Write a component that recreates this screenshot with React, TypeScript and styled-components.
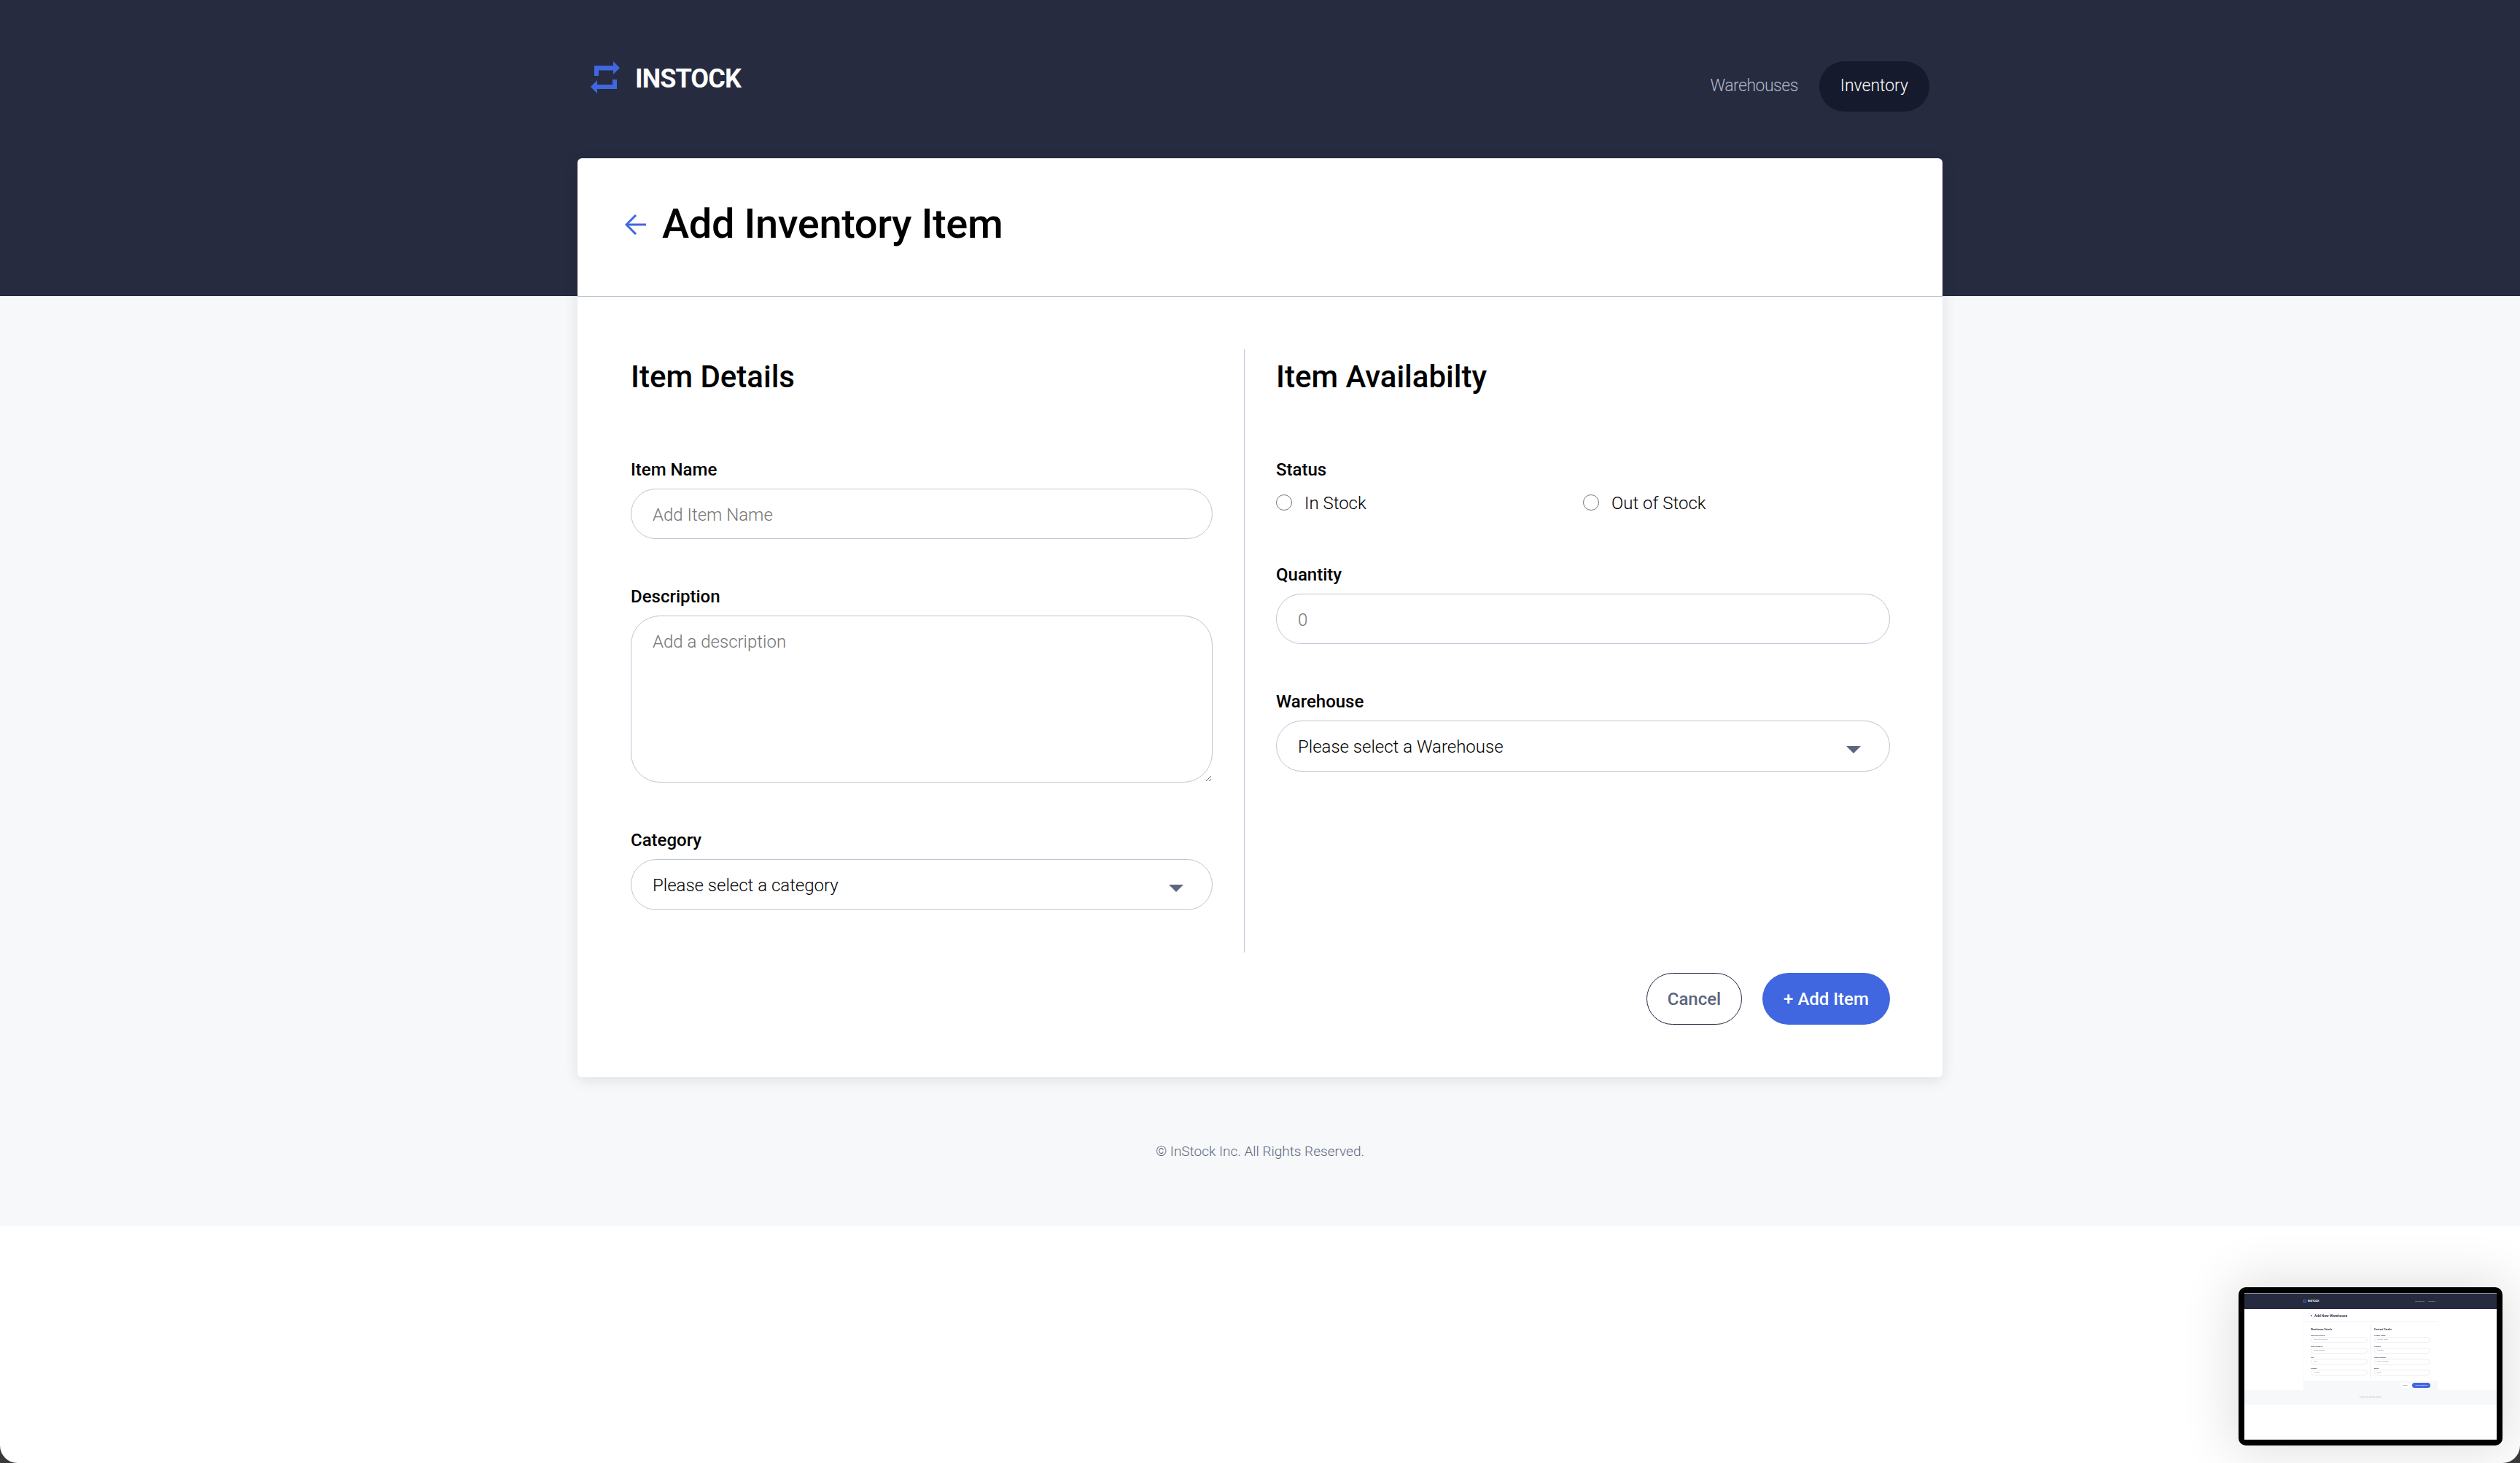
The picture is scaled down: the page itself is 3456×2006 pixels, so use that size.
import React from "react";
import styled, { createGlobalStyle } from "styled-components";

const FONT = `Roboto, "Noto Sans", "Liberation Sans", sans-serif`;

const Global = createGlobalStyle`
  *, *::before, *::after { box-sizing: border-box; }
  html, body { margin: 0; padding: 0; background: #3a3a3a; }
  body { font-family: ${FONT}; color: #000; }
  #root { width: 3456px; height: 2006px; }
`;

const Frame = styled.div`
  position: relative;
  width: 3456px;
  height: 2006px;
  background: #fff;
  border-radius: 0 0 24px 24px;
  overflow: hidden;
`;

const Main = styled.div`
  background: #f7f8fa;
  height: 1681px;
  display: flex;
  flex-direction: column;
`;

const Header = styled.header`
  background: #262b3f;
  height: 406px;
  flex: none;
`;

const HeaderInner = styled.div`
  width: 1872px;
  margin: 0 auto;
  padding: 84px 18px 0;
  display: flex;
  align-items: flex-start;
  justify-content: space-between;
`;

const Brand = styled.div`
  display: flex;
  align-items: center;
  gap: 21px;
  height: 44px;
`;

const BrandName = styled.span`
  color: #fff;
  font-size: 36px;
  font-weight: 700;
  letter-spacing: -0.9px;
  line-height: 44px;
  padding-top: 4px;
`;

const Nav = styled.nav`
  display: flex;
  align-items: center;
  gap: 29px;
`;

const NavItem = styled.a<{ $active?: boolean }>`
  display: flex;
  align-items: center;
  height: 69px;
  border-radius: 35px;
  font-size: 23px;
  font-weight: 300;
  line-height: 28px;
  padding: ${(p) => (p.$active ? "0 29px 1px" : "0 0 1px")};
  letter-spacing: ${(p) => (p.$active ? "0" : "-0.5px")};
  color: ${(p) => (p.$active ? "#fff" : "#b2b8ca")};
  background: ${(p) => (p.$active ? "#151a2c" : "transparent")};
`;

const Card = styled.section`
  width: 1872px;
  margin: -189px auto 0;
  background: #fff;
  border-radius: 6px;
  box-shadow: 0 4px 20px rgba(19, 24, 44, 0.1);
  flex: none;
`;

const TitleBar = styled.div`
  height: 190px;
  border-bottom: 1px solid #bdc5d5;
  padding: 0 0 10px 65px;
  display: flex;
  align-items: center;
  gap: 22px;
`;

const BackIcon = styled.svg`
  position: relative;
  top: 1px;
  flex: none;
`;

const Title = styled.h1`
  margin: 0;
  font-size: 56px;
  font-weight: 500;
  letter-spacing: -0.4px;
  line-height: 64px;
  color: #000;
`;

const Columns = styled.div`
  display: grid;
  grid-template-columns: 842px 885px;
  padding: 72px 0 0 73px;
`;

const Column = styled.div<{ $right?: boolean }>`
  display: flex;
  flex-direction: column;
  height: 827px;
  padding: ${(p) => (p.$right ? "0 0 0 43px" : "0 43px 0 0")};
  ${(p) => (p.$right ? "" : "border-right: 1px solid #bdc5d5;")}
`;

const Heading = styled.h2`
  margin: 0 0 78px;
  padding-top: 1px;
  font-size: 42px;
  font-weight: 500;
  line-height: 74px;
  color: #000;
`;

const Field = styled.div`
  display: flex;
  flex-direction: column;
  margin-bottom: 67px;
`;

const Label = styled.label`
  font-size: 24px;
  font-weight: 500;
  line-height: 24px;
  margin-bottom: 14px;
  color: #000;
`;

const Input = styled.input`
  width: 100%;
  height: 69px;
  border: 1px solid #bdc5d5;
  border-radius: 35px;
  padding: 2px 29px 0;
  background: #fff;
  font-family: ${FONT};
  font-size: 24px;
  font-weight: 300;
  outline: none;
  &::placeholder { color: #757575; }
`;

const TextArea = styled.textarea`
  display: block;
  width: 100%;
  height: 229px;
  border: 1px solid #bdc5d5;
  border-radius: 40px;
  padding: 21px 29px;
  background: #fff;
  font-family: ${FONT};
  font-size: 24px;
  font-weight: 300;
  outline: none;
  &::placeholder { color: #757575; }
`;

const SelectWrap = styled.div`
  position: relative;
  height: 70px;
`;

const Select = styled.select`
  width: 100%;
  height: 70px;
  appearance: none;
  border: 1px solid #bdc5d5;
  border-radius: 35px;
  padding: 2px 29px 0;
  background: #fff;
  color: #000;
  font-family: ${FONT};
  font-size: 24px;
  font-weight: 300;
  outline: none;
`;

const Caret = styled.svg`
  position: absolute;
  right: 40px;
  top: 35px;
  width: 20px;
  height: 10px;
  pointer-events: none;
`;

const RadioRow = styled.div`
  display: grid;
  grid-template-columns: 1fr 1fr;
  margin: 8px 0 76px;
  height: 22px;
`;

const RadioLabel = styled.label`
  display: flex;
  align-items: center;
  gap: 17px;
  height: 22px;
  font-size: 24px;
  font-weight: 300;
  line-height: 22px;
  color: #000;
`;

const RadioText = styled.span`
  padding-top: 1px;
`;

const Radio = styled.input`
  width: 22px;
  height: 22px;
  margin: 0;
  flex: none;
`;

const Actions = styled.div`
  display: flex;
  justify-content: flex-end;
  gap: 28px;
  padding: 28px 72px 72px 0;
`;

const Button = styled.button<{ $primary?: boolean }>`
  height: 71px;
  border-radius: 36px;
  font-family: ${FONT};
  font-size: 24px;
  font-weight: 500;
  padding: 0;
  width: ${(p) => (p.$primary ? "175px" : "131px")};
  color: ${(p) => (p.$primary ? "#fff" : "#5c667e")};
  background: ${(p) => (p.$primary ? "#4067df" : "#fff")};
  border: ${(p) => (p.$primary ? "none" : "1px solid #232940")};
`;

const Footer = styled.footer`
  text-align: center;
  margin-top: 90px;
  font-size: 19px;
  font-weight: 300;
  line-height: 24px;
  color: #5c667e;
`;

/* Picture-in-picture preview at the bottom right */
const Preview = styled.div`
  position: absolute;
  left: 3070px;
  top: 1765px;
  width: 362px;
  height: 217px;
  background: #000;
  border-radius: 10px;
  padding: 8px;
  box-shadow: 0 0 70px 10px rgba(0, 0, 0, 0.12);
`;

const MiniPage = styled.div`
  width: 346px;
  height: 201px;
  background: #fff;
  overflow: hidden;
  filter: blur(0.4px);
  display: flex;
  flex-direction: column;
`;

const MiniHeader = styled.div`
  height: 22px;
  flex: none;
  background: #262b3f;
  border-top: 1px solid #8d8f99;
  display: flex;
  justify-content: space-between;
  align-items: center;
  padding: 0 84px 1px 81px;
`;

const MiniBrand = styled.div`
  display: flex;
  align-items: center;
  gap: 2px;
  color: #fff;
  font-size: 3.7px;
  font-weight: 700;
`;

const MiniLogo = styled.i`
  display: block;
  width: 4px;
  height: 4px;
  border: 1px solid #4067df;
`;

const MiniNav = styled.div`
  display: flex;
  gap: 5px;
  color: #b2b8ca;
  font-size: 2.4px;
`;

const MiniCard = styled.div`
  width: 184px;
  margin: 0 0 0 81px;
  height: 111px;
  flex: none;
  display: flex;
  flex-direction: column;
  box-shadow: 0 0 2px rgba(19, 24, 44, 0.05);
`;

const MiniTitle = styled.div`
  height: 18px;
  flex: none;
  padding-left: 10px;
  display: flex;
  align-items: center;
  font-size: 4.9px;
  font-weight: 500;
  color: #13182c;
  border-bottom: 1px solid #f1f2f5;
  &::before {
    content: "";
    width: 2px;
    height: 2px;
    border-radius: 50%;
    background: #4067df;
    margin-right: 3px;
  }
`;

const MiniCols = styled.div`
  display: grid;
  grid-template-columns: 83px 81px;
  margin: 3px 0;
  padding-left: 10px;
  height: 74px;
  flex: none;
`;

const MiniCol = styled.div<{ $right?: boolean }>`
  padding: ${(p) => (p.$right ? "4px 0 0 4px" : "4px 4px 0 0")};
  ${(p) => (p.$right ? "" : "border-right: 1px solid #eceef2;")}
`;

const MiniHeading = styled.div`
  font-size: 3.5px;
  font-weight: 500;
  line-height: 6px;
  color: #13182c;
  margin-bottom: 3.5px;
`;

const MiniLabel = styled.div`
  font-size: 2.4px;
  font-weight: 500;
  line-height: 3px;
  color: #13182c;
`;

const MiniField = styled.div`
  height: 8px;
  margin: 0 0 4.2px;
  padding-left: 3px;
  border: 1px solid #eceef2;
  border-radius: 4px;
  font-size: 2.4px;
  line-height: 6px;
  color: #8c8c8c;
`;

const MiniActions = styled.div`
  height: 13px;
  flex: none;
  background: #f7f8fa;
  display: flex;
  justify-content: flex-end;
  align-items: center;
  gap: 3px;
  padding-right: 10px;
`;

const MiniButton = styled.div<{ $primary?: boolean }>`
  height: 7px;
  width: ${(p) => (p.$primary ? "25px" : "13px")};
  border-radius: 4px;
  text-align: center;
  font-size: 2.2px;
  line-height: 7px;
  color: ${(p) => (p.$primary ? "#fff" : "#5c667e")};
  background: ${(p) => (p.$primary ? "#4067df" : "#fff")};
`;

const MiniFooter = styled.div`
  height: 20px;
  flex: none;
  background: #f7f8fa;
  text-align: center;
  font-size: 2px;
  line-height: 19px;
  color: #5c667e;
`;

const LogoIcon = () => (
  <svg width="40" height="44" viewBox="0 0 40 44" fill="#4067df" aria-hidden="true">
    <polygon points="5,20 11,20 11,12.5 31,12.5 31,18 40,9 31,0 31,6 5,6" />
    <polygon points="36,25 30,25 30,32 9,32 9,26 0,35 9,44 9,38 36,38" />
  </svg>
);

const BackArrow = () => (
  <BackIcon width="29" height="28" viewBox="0 0 29 28" fill="none" stroke="#4067df" strokeWidth="3" aria-hidden="true">
    <path d="M29 14H3" />
    <path d="M15 1 2 14l13 13" />
  </BackIcon>
);

const ArrowDown = () => (
  <Caret viewBox="0 0 20 10" aria-hidden="true">
    <polygon points="0,0 20,0 10,10" fill="#5c667e" />
  </Caret>
);

const miniFields = [
  ["Warehouse Name", "Street Address", "City", "Country"],
  ["Contact Name", "Position", "Phone Number", "Email"],
];

export default function App() {
  return (
    <Frame>
      <Global />
      <Main>
        <Header>
          <HeaderInner>
            <Brand>
              <LogoIcon />
              <BrandName>INSTOCK</BrandName>
            </Brand>
            <Nav>
              <NavItem>Warehouses</NavItem>
              <NavItem $active>Inventory</NavItem>
            </Nav>
          </HeaderInner>
        </Header>
        <Card>
          <TitleBar>
            <BackArrow />
            <Title>Add Inventory Item</Title>
          </TitleBar>
          <Columns>
            <Column>
              <Heading>Item Details</Heading>
              <Field>
                <Label>Item Name</Label>
                <Input placeholder="Add Item Name" />
              </Field>
              <Field>
                <Label>Description</Label>
                <TextArea placeholder="Add a description" />
              </Field>
              <Field>
                <Label>Category</Label>
                <SelectWrap>
                  <Select defaultValue="">
                    <option value="">Please select a category</option>
                  </Select>
                  <ArrowDown />
                </SelectWrap>
              </Field>
            </Column>
            <Column $right>
              <Heading>Item Availabilty</Heading>
              <Label>Status</Label>
              <RadioRow>
                <RadioLabel>
                  <Radio type="radio" name="status" />
                  <RadioText>In Stock</RadioText>
                </RadioLabel>
                <RadioLabel>
                  <Radio type="radio" name="status" />
                  <RadioText>Out of Stock</RadioText>
                </RadioLabel>
              </RadioRow>
              <Field>
                <Label>Quantity</Label>
                <Input placeholder="0" />
              </Field>
              <Field>
                <Label>Warehouse</Label>
                <SelectWrap>
                  <Select defaultValue="">
                    <option value="">Please select a Warehouse</option>
                  </Select>
                  <ArrowDown />
                </SelectWrap>
              </Field>
            </Column>
          </Columns>
          <Actions>
            <Button>Cancel</Button>
            <Button $primary>+ Add Item</Button>
          </Actions>
        </Card>
        <Footer>© InStock Inc. All Rights Reserved.</Footer>
      </Main>
      <Preview>
        <MiniPage>
          <MiniHeader>
            <MiniBrand>
              <MiniLogo />
              INSTOCK
            </MiniBrand>
            <MiniNav>
              <span>Warehouses</span>
              <span>Inventory</span>
            </MiniNav>
          </MiniHeader>
          <MiniCard>
            <MiniTitle>Add New Warehouse</MiniTitle>
            <MiniCols>
              {miniFields.map((fields, i) => (
                <MiniCol key={i} $right={i === 1}>
                  <MiniHeading>{i === 0 ? "Warehouse Details" : "Contact Details"}</MiniHeading>
                  {fields.map((f) => (
                    <React.Fragment key={f}>
                      <MiniLabel>{f}:</MiniLabel>
                      <MiniField>{f}</MiniField>
                    </React.Fragment>
                  ))}
                </MiniCol>
              ))}
            </MiniCols>
            <MiniActions>
              <MiniButton>Cancel</MiniButton>
              <MiniButton $primary>+ Add Warehouse</MiniButton>
            </MiniActions>
          </MiniCard>
          <MiniFooter>© InStock Inc. All Rights Reserved.</MiniFooter>
        </MiniPage>
      </Preview>
    </Frame>
  );
}
